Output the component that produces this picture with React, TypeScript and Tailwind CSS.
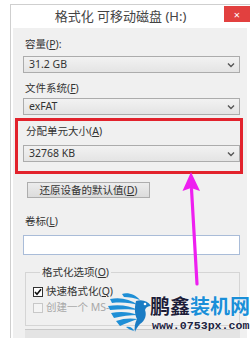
import React from "react";

const font = { fontFamily: '"Noto Sans", "Noto Sans CJK SC", sans-serif' } as React.CSSProperties;

function Chevron() {
  return (
    <svg width="8" height="6" viewBox="0 0 8 6" className="mr-[4px]">
      <path d="M1 1.5 L4 4.5 L7 1.5" fill="none" stroke="#555" strokeWidth="1.4" />
    </svg>
  );
}

function Select({ value }: { value: string }) {
  return (
    <div className="flex items-center justify-between w-[217px] h-[17px] border border-[#acacac] bg-gradient-to-b from-[#f2f2f2] to-[#e4e4e4] text-[10.5px] text-[#333] leading-none">
      <span className="pl-[5px]">{value}</span>
      <Chevron />
    </div>
  );
}

function Label({ pre, acc, post = "" }: { pre: string; acc: string; post?: string }) {
  return (
    <div className="h-[14px] leading-[14px] text-[10.5px] text-[#333] pl-[2px]">
      {pre}(<span className="underline">{acc}</span>){post}
    </div>
  );
}

export default function App() {
  return (
    <div className="relative w-[250px] h-[338px] bg-white overflow-hidden" style={font}>
      <div className="ml-[10px] mt-[4px] w-[240px] h-[334px] border-l border-t border-[#cfcfcf] bg-white flex flex-col">
        {/* title bar */}
        <div className="h-[23px] flex items-start">
          <div className="flex-1 h-[23px] flex items-center justify-center text-[13px] text-[#444] pl-[6px]">
            格式化 可移动磁盘 (H:)
          </div>
          <div className="mt-[1px] w-[26px] h-[16px] bg-[#e2403f] flex items-center justify-center text-white text-[11px] leading-none">
            ×
          </div>
        </div>
        {/* content */}
        <div className="ml-[2px] mr-[3px] flex-1 bg-[#f0f0f0] flex flex-col pl-[10px]">
          <div className="mt-[9px]">
            <Label pre="容量" acc="P" post=":" />
          </div>
          <div className="mt-[5px]">
            <Select value="31.2 GB" />
          </div>
          <div className="mt-[8px]">
            <Label pre="文件系统" acc="F" />
          </div>
          <div className="mt-[3px]">
            <Select value="exFAT" />
          </div>
          <div className="mt-[3px] -ml-[8px] w-[228px] border-[3px] border-[#e2222c] pl-[5px] pt-[3px] pb-[9px]">
            <div className="pl-[1px]">
              <Label pre="分配单元大小" acc="A" />
            </div>
            <div className="mt-[7px]">
              <Select value="32768 KB" />
            </div>
          </div>
          <div className="mt-[8px] ml-[4px] w-[123px] h-[16px] border border-[#adadad] bg-gradient-to-b from-[#ececec] to-[#dcdcdc] flex items-center justify-center text-[10.5px] text-[#333] leading-none">
            还原设备的默认值(<span className="underline">D</span>)
          </div>
          <div className="mt-[16px]">
            <Label pre="卷标" acc="L" />
          </div>
          <div className="mt-[7px] w-[217px] h-[20px] bg-white border border-[#a9bcd8]" />
          <fieldset className="mt-[10px] ml-[2px] w-[215px] border border-[#d5d5d5] pl-[7px] pb-[10px]">
            <legend className="ml-[7px] px-[2px] h-[14px] leading-[14px] text-[10.5px] text-[#333]">
              格式化选项(<span className="underline">O</span>)
            </legend>
            <div className="mt-[6px] h-[14px] flex items-center gap-[2px] text-[10.5px] text-[#333]">
              <div className="w-[10px] h-[10px] bg-white border border-[#333] flex items-center justify-center">
                <svg width="8" height="8" viewBox="0 0 8 8">
                  <path d="M1 4 L3 6.3 L7 1.3" fill="none" stroke="#111" strokeWidth="1.6" />
                </svg>
              </div>
              <span className="ml-[1px]">
                快速格式化(<span className="underline">Q</span>)
              </span>
            </div>
            <div className="mt-[2px] h-[14px] flex items-center gap-[2px] text-[10.5px] text-[#a8a8a8]">
              <div className="w-[10px] h-[10px] bg-[#f4f4f4] border border-[#c8c8c8]" />
              <span className="ml-[1px]">创建一个 MS-</span>
            </div>
          </fieldset>
          <div className="mt-[3px] ml-[2px] w-[215px] h-[12px] border-t border-[#c8c8c8] bg-[#e4e4e4]" />
        </div>
      </div>

      {/* magenta arrow annotation */}
      <svg className="absolute left-0 top-0 pointer-events-none" width="250" height="338" viewBox="0 0 250 338">
        <path d="M191 172 L182.5 191 L191 188 L200 191 Z" fill="#ee1ff0" />
        <path d="M191.5 189 L197 284" stroke="#ee1ff0" strokeWidth="3.2" strokeLinecap="round" />
      </svg>

      {/* watermark */}
      <div className="absolute left-[108px] top-[291px] pointer-events-none">
        <svg width="44" height="42" viewBox="0 0 44 42">
          <path d="M2 8 C12 6 22 8 30 14 C24 12 14 11 4 12 Z" fill="#1f8fd6" />
          <path d="M0 15 C12 13 22 15 30 19 C22 18 12 18 2 19 Z" fill="#1f8fd6" />
          <path d="M3 22 C13 20 22 21 30 24 C22 24 14 25 6 27 Z" fill="#1f8fd6" />
          <path d="M8 30 C16 27 23 27 30 28 C24 30 18 32 12 35 Z" fill="#1f8fd6" />
          <path d="M14 3 C20 1 28 4 32 9 C27 7 21 6 16 6 Z" fill="#1f8fd6" />
          <path d="M28 10 C34 8 40 10 43 15 C40 15 38 16 37 19 C39 24 37 30 32 33 C30 35 28 38 27 41 C26 36 27 32 29 28 C27 24 26 18 28 10 Z" fill="#1a7cc4" />
          <circle cx="37" cy="13" r="1.3" fill="#ffffff" />
          <path d="M18 36 C22 35 25 37 26 40 C23 39 20 38 18 36 Z" fill="#1f8fd6" />
        </svg>
      </div>
      <div
        className="absolute left-[150px] top-[294px] text-[20px] leading-[24px] font-bold pointer-events-none"
        style={{ fontFamily: '"Noto Sans CJK SC", sans-serif', textShadow: "0 0 2px #fff" }}
      >
        <span className="text-[#1c1c38]">鹏鑫</span>
        <span className="text-[#1a8fd8]">装机网</span>
      </div>
      <div
        className="absolute left-[152px] top-[319px] text-[11.6px] leading-[14px] font-bold text-[#1c2340] pointer-events-none"
        style={{ fontFamily: '"Liberation Mono", monospace', textShadow: "0 0 2px #fff" }}
      >
        www.0753px.com
      </div>
    </div>
  );
}
